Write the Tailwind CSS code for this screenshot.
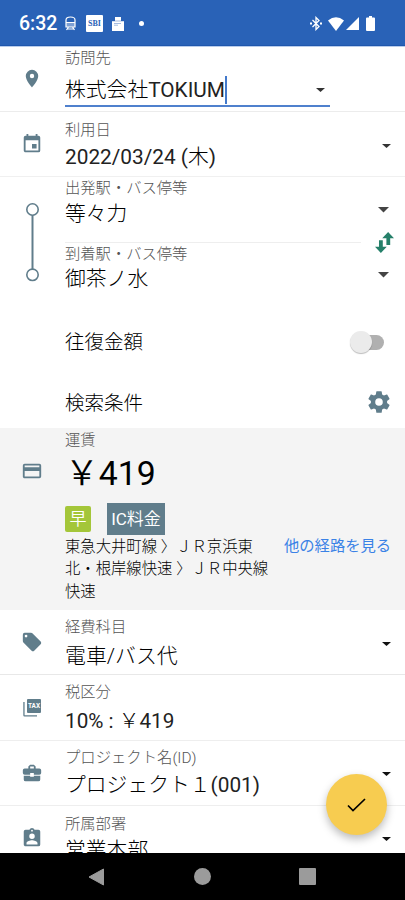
<!DOCTYPE html>
<html lang="ja">
<head>
<meta charset="utf-8">
<title>交通費</title>
<script src="https://cdn.jsdelivr.net/npm/@tailwindcss/browser@4"></script>
</head>
<body class="bg-white">
<div class="relative flex h-[900px] w-[405px] flex-col overflow-hidden bg-white font-['Roboto','Noto_Sans_CJK_JP',sans-serif] text-black">

  <header class="flex h-[46px] shrink-0 items-center border-b border-[#1f57ad] bg-[#2962b7] pl-[19px] pr-[30px] pt-[2px] text-white">
    <span class="w-[38px] whitespace-nowrap text-[19.5px] font-medium leading-6">6:32</span>
    <svg class="ml-[8px] h-[15px] w-[11px]" viewBox="0 0 11 15"><path fill="none" stroke="#fff" stroke-width="1.2" d="M1 11V4Q1 1 5.500 1T10 4v7zM1 6.500h9M1.500 14l2-3m6 3-2-3M2 13h7"/><path fill="#fff" opacity=".4" d="M1 7h9v4H1z"/></svg>
    <span class="ml-[10px] flex h-[17px] w-[17px] items-center justify-center rounded-[1px] bg-white pt-px font-['Liberation_Serif',serif] text-[8px] font-bold leading-none text-[#2962b7]">SBI</span>
    <svg class="ml-[9px] h-[14px] w-[12px]" viewBox="0 0 12 14"><path fill="#fff" d="M3 0h6v4h3v10H0V4h3z"/><path stroke="#2962b7" stroke-width=".6" opacity=".7" d="M0 4h12M2 6.500h7M2 8.200h4"/></svg>
    <span class="ml-[15px] h-[5px] w-[5px] rounded-full bg-white"></span>
    <svg class="ml-auto h-[15px] w-[12px]" viewBox="0 0 12 15"><path fill="none" stroke="#fff" stroke-width="1.300" d="m2.500 4 6.500 6.500L6 13.500V1.500l3 3L2.500 11"/><path fill="#fff" d="M0 6.500h2v2H0zM10 6.500h2v2h-2z"/></svg>
    <svg class="ml-[6px] h-[14px] w-[16px]" viewBox="0 0 16 14"><path fill="#fff" d="M0 3.500Q8-2.800 16 3.500L8 14z"/></svg>
    <svg class="ml-[2px] h-[13px] w-[13px]" viewBox="0 0 13 13"><path fill="#fff" d="M13 0v13H0z"/></svg>
    <svg class="ml-[7px] h-[15px] w-[9px]" viewBox="0 0 9 15"><path fill="#fff" d="M3 0h3v1.500h2q1 0 1 1V14q0 1-1 1H1q-1 0-1-1V2.500q0-1 1-1h2z"/></svg>
  </header>

  <main class="flex h-[807px] shrink-0 flex-col overflow-hidden border-t border-[#b9cdec]">
    <section class="flex h-[65px] shrink-0 border-b border-[#ececec]">
      <div class="w-[65px] pl-[21px] pt-[21px]"><svg class="h-[22px] w-[22px]" viewBox="0 0 24 24" fill="#607d8b"><path d="M12 2a6.800 6.800 0 0 0-6.800 6.800C5.200 14 12 21.200 12 21.200s6.800-7.200 6.800-12.400A6.800 6.800 0 0 0 12 2zm0 9.200a2.400 2.400 0 1 1 0-4.800 2.400 2.400 0 0 1 0 4.800z"/></svg></div>
      <div class="w-[265px]">
        <p class="h-[23px] text-[15.3px] font-light leading-[23px] text-[#555]">訪問先</p>
        <div class="flex h-[37px] items-center border-b-2 border-[#4f80cd] pt-[4px]">
          <p class="whitespace-nowrap text-[20.8px] font-light leading-[30px]">株式会社<span class="font-normal text-[#222]">TOKIUM</span></p><span class="h-[28px] w-[2px] shrink-0 bg-[#4379cb]"></span>
          <svg class="ml-auto mr-[5px] h-[4px] w-[9px]" viewBox="0 0 9 4"><path fill="#333" d="M0 0h9L4.500 4z"/></svg>
        </div>
      </div>
    </section>

    <section class="flex h-[65px] shrink-0 border-b border-[#f0f0f0]">
      <div class="w-[65px] pl-[21px] pt-[21px]"><svg class="h-[22px] w-[22px]" viewBox="0 0 24 24" fill="#607d8b"><path d="M17 12h-5v5h5zM16 1v2H8V1H6v2H5a2 2 0 0 0-2 2v14c0 1.100.9 2 2 2h14a2 2 0 0 0 2-2V5a2 2 0 0 0-2-2h-1V1zm3 18H5V8h14z"/></svg></div>
      <div class="flex-1 pt-[6px]">
        <p class="text-[15.3px] font-light leading-[24px] text-[#555]">利用日</p>
        <p class="text-[20.8px] font-light leading-[30px]"><span class="font-normal text-[#222]">2022/03/24 (</span>木<span class="font-normal text-[#222]">)</span></p>
      </div>
      <svg class="mr-[14px] mt-[31.500px] h-[4px] w-[9px]" viewBox="0 0 9 4"><path fill="#333" d="M0 0h9L4.500 4z"/></svg>
    </section>

    <section class="flex h-[129px] shrink-0">
      <svg class="mr-[20px] h-[129px] w-[45px]" viewBox="0 0 45 129" fill="none" stroke="#607d8b"><path stroke-width="2" d="M32.500 38v54"/><circle cx="32.500" cy="32.500" r="5.700" stroke-width="1.600"/><circle cx="32.500" cy="97.800" r="5.700" stroke-width="1.600"/></svg>
      <div class="w-[296px]">
        <div class="h-[66px] border-b border-[#eee] pt-px">
          <p class="h-[21px] text-[15.3px] font-light leading-[21px] text-[#555]">出発駅・バス停等</p>
          <p class="text-[20.8px] font-light leading-[30px]">等々力</p>
        </div>
        <p class="h-[21px] pt-px text-[15.3px] font-light leading-[21px] text-[#555]">到着駅・バス停等</p>
        <p class="text-[20.8px] font-light leading-[30px]">御茶ノ水</p>
      </div>
      <div class="flex w-[44px] flex-col items-center pt-[30px]">
        <svg class="h-[6px] w-[11px]" viewBox="0 0 11 6"><path fill="#444" d="M0 0h11L5.500 5.500z"/></svg>
        <svg class="mt-[19px] h-[21px] w-[19px] translate-x-px" viewBox="0 0 20 22"><path fill="#26806a" d="M13.800 0 20 6.500h-4v7h-4v-7H7.600zM4.200 8.500h4v7h4.200L6.200 22 0 15.500h4.200z"/></svg>
        <svg class="mt-[19px] h-[6px] w-[11px]" viewBox="0 0 11 6"><path fill="#444" d="M0 0h11L5.500 5.500z"/></svg>
      </div>
    </section>

    <section class="flex h-[72px] shrink-0 items-center pl-[65px] pr-[21px]">
      <p class="pt-[2px] text-[19.5px] font-light leading-[30px]">往復金額</p>
      <div class="ml-auto flex h-[15px] w-[32px] items-center rounded-full bg-[#b0b0b0]"><span class="-ml-[2px] h-[22px] w-[22px] shrink-0 rounded-full bg-[#ebebeb] shadow-[0_1px_1px_#0004]"></span></div>
    </section>
    <section class="flex h-[50px] shrink-0 items-center pl-[65px] pr-[13px]">
      <p class="pt-[2px] text-[19.5px] font-light leading-[30px]">検索条件</p>
      <svg class="mb-[2px] ml-auto h-[26px] w-[26px]" viewBox="0 0 24 24" fill="#607d8b"><path d="M19.430 12.980c.040-.320.070-.640.070-.980s-.030-.660-.070-.980l2.110-1.650c.190-.150.240-.420.120-.640l-2-3.460c-.120-.220-.390-.300-.610-.220l-2.490 1c-.520-.400-1.080-.730-1.690-.980l-.380-2.650C14.460 2.180 14.250 2 14 2h-4c-.250 0-.460.180-.490.420l-.380 2.650c-.610.250-1.170.590-1.690.980l-2.490-1c-.230-.090-.490 0-.610.220l-2 3.460c-.130.220-.070.490.120.640l2.110 1.650c-.040.320-.070.650-.070.980s.030.660.070.980l-2.110 1.650c-.190.150-.240.420-.120.640l2 3.460c.120.220.390.300.610.220l2.490-1c.520.400 1.080.730 1.690.980l.380 2.650c.030.240.240.420.490.420h4c.250 0 .460-.180.490-.420l.380-2.650c.610-.250 1.170-.590 1.690-.980l2.490 1c.230.090.490 0 .610-.220l2-3.460c.120-.220.070-.490-.120-.640zM12 15.500a3.500 3.500 0 1 1 0-7 3.500 3.500 0 0 1 0 7z"/></svg>
    </section>

    <section class="flex h-[182px] shrink-0 bg-[#f4f4f4]">
      <div class="w-[65px] pl-[21px] pt-[32px]"><svg class="h-[22px] w-[22px]" viewBox="0 0 24 24" fill="#607d8b"><path d="M20 4H4a2 2 0 0 0-2 2v12c0 1.100.9 2 2 2h16a2 2 0 0 0 2-2V6a2 2 0 0 0-2-2zm0 14H4v-6h16zm0-10H4V6h16z"/></svg></div>
      <div class="w-[210px]">
        <p class="h-[22px] pt-px text-[15.3px] font-light leading-[22px] text-[#555]">運賃</p>
        <p class="h-[48px] text-[33.8px] font-[350] leading-[48px]">￥<span class="font-normal">419</span></p>
        <div class="mt-[5px] flex h-[32px] items-center gap-[16px] text-white">
          <span class="flex h-[26px] w-[26px] items-center justify-center rounded-[2px] bg-[#a4c639] pt-[2px] text-[17px] font-[350]">早</span>
          <span class="flex h-[32px] w-[58px] items-center justify-center bg-[#607d8b] pt-[2px] text-[17px] font-[350]"><span class="font-normal">IC</span>料金</span>
        </div>
        <p class="whitespace-nowrap pt-[0.5px] text-[15.35px] font-light leading-[22.6px]">東急大井町線 〉ＪＲ京浜東<br>北・根岸線快速 〉ＪＲ中央線<br>快速</p>
      </div>
      <p class="mt-[107px] pl-[9px] text-[15.3px] font-normal leading-[22px] text-[#3a82e6]">他の経路を見る</p>
    </section>

    <section class="flex h-[65px] shrink-0 border-b border-[#e8e8e8]">
      <div class="w-[65px] pl-[21px] pt-[21px]"><svg class="h-[22px] w-[22px]" viewBox="0 0 24 24" fill="#607d8b"><path d="m21.410 11.580-9-9C12.050 2.220 11.550 2 11 2H4a2 2 0 0 0-2 2v7c0 .550.220 1.050.590 1.420l9 9c.360.360.860.580 1.410.580s1.050-.220 1.410-.590l7-7c.370-.360.590-.860.590-1.410s-.230-1.060-.590-1.420zM5.500 7a1.500 1.500 0 1 1 0-3 1.500 1.500 0 0 1 0 3z"/></svg></div>
      <div class="flex-1 pt-[5px]">
        <p class="h-[26px] text-[15.3px] font-light leading-[24px] text-[#555]">経費科目</p>
        <p class="text-[20.9px] font-light leading-[30px]">電車/バス代</p>
      </div>
      <svg class="mr-[14px] mt-[31.500px] h-[4px] w-[9px]" viewBox="0 0 9 4"><path fill="#111" d="M0 0h9L4.500 4z"/></svg>
    </section>

    <section class="flex h-[66px] shrink-0 border-b border-[#eee]">
      <div class="w-[65px] pl-[23px] pt-[23.5px]"><svg class="h-[18px] w-[18px]" viewBox="0 0 18 18"><path fill="#607d8b" d="M5 0h12q1 0 1 1v12q0 1-1 1H5q-1 0-1-1V1q0-1 1-1zM.3 3h1.300v13.200H14v1.300H1.500Q.3 17.500.3 16.300z"/><text x="11" y="9.200" text-anchor="middle" font-family="Roboto" font-weight="700" font-size="6.500" fill="#fff">TAX</text></svg></div>
      <div class="flex-1 pt-[5px]">
        <p class="h-[26px] text-[15.3px] font-light leading-[24px] text-[#555]">税区分</p>
        <p class="text-[20.7px] font-light leading-[30px]"><span class="font-normal text-[#222]">10% : </span>￥<span class="font-normal text-[#222]">419</span></p>
      </div>
    </section>

    <section class="flex h-[65px] shrink-0 border-b border-[#eee]">
      <div class="w-[65px] pl-[21px] pt-[21px]"><svg class="h-[22px] w-[22px]" viewBox="0 0 24 24" fill="#607d8b"><path d="M10 16v-1H3.010L3 19a2 2 0 0 0 2 2h14a2 2 0 0 0 2-2v-4h-7v1zm10-9h-4V5l-2-2h-4L8 5v2H4a2 2 0 0 0-2 2v3a2 2 0 0 0 2 2h6v-2h4v2h6a2 2 0 0 0 2-2V9a2 2 0 0 0-2-2zm-6 0h-4V5h4z"/></svg></div>
      <div class="flex-1 pt-[5px]">
        <p class="text-[15.35px] font-light leading-[24px] text-[#555]">プロジェクト名(ID)</p>
        <p class="text-[20.8px] font-light leading-[30px]">プロジェクト１<span class="font-normal text-[#222]">(001)</span></p>
      </div>
      <svg class="mr-[14px] mt-[31px] h-[4px] w-[9px]" viewBox="0 0 9 4"><path fill="#111" d="M0 0h9L4.500 4z"/></svg>
    </section>

    <section class="flex h-[65px] shrink-0">
      <div class="w-[65px] pl-[21px] pt-[21px]"><svg class="h-[22px] w-[22px]" viewBox="0 0 24 24" fill="#607d8b"><path d="M19 3h-4.180a3 3 0 0 0-5.640 0H5a2 2 0 0 0-2 2v14c0 1.100.9 2 2 2h14a2 2 0 0 0 2-2V5a2 2 0 0 0-2-2zm-7 0a1 1 0 1 1 0 2 1 1 0 0 1 0-2zm0 4a3 3 0 1 1 0 6 3 3 0 0 1 0-6zm6 12H6v-1.400c0-2 4-3.100 6-3.100s6 1.100 6 3.100z"/></svg></div>
      <div class="flex-1 pt-[6px]">
        <p class="h-[23px] text-[15.3px] font-light leading-[24px] text-[#555]">所属部署</p>
        <p class="text-[20.8px] font-light leading-[30px]">営業本部</p>
      </div>
      <svg class="mr-[14px] mt-[31px] h-[4px] w-[9px]" viewBox="0 0 9 4"><path fill="#111" d="M0 0h9L4.500 4z"/></svg>
    </section>
  </main>

  <nav class="flex h-[47px] shrink-0 items-center bg-black pl-[88px]">
    <svg class="h-[18px] w-[16px]" viewBox="0 0 16 18"><path fill="#9b9b9b" stroke="#9b9b9b" stroke-linejoin="round" d="M15.500 1v16L1 9z"/></svg>
    <span class="ml-[90px] h-[17px] w-[17px] rounded-full bg-[#9b9b9b]"></span>
    <span class="ml-[88px] h-[17px] w-[17px] rounded-[1px] bg-[#9b9b9b]"></span>
  </nav>

  <button class="absolute left-[326px] top-[774px] flex h-[61px] w-[61px] items-center justify-center rounded-full bg-[#f7cc50] shadow-[0_4px_8px_#0004]">
    <svg class="h-[14px] w-[19px]" viewBox="0 0 19 14"><path fill="none" stroke="#000" stroke-width="1.700" d="m1 7.500 5 5L18 1"/></svg>
  </button>
</div>
</body>
</html>
